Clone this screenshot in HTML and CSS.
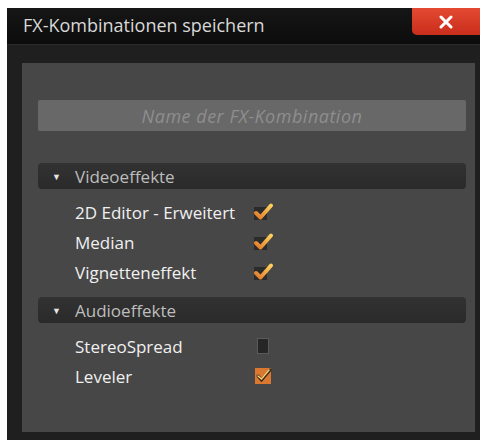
FILE: index.html
```html
<!DOCTYPE html>
<html>
<head>
<meta charset="utf-8">
<link rel="stylesheet" href="styles.css">
</head>
<body>
<div class="window">
  <div class="titlebar">
    <span class="title">FX-Kombinationen speichern</span>
    <button class="close" aria-label="Schließen">
      <svg width="14" height="14" viewBox="0 0 14 14"><path d="M2 2 L12 12 M12 2 L2 12" stroke="#fff" stroke-width="3" stroke-linecap="round"/></svg>
    </button>
  </div>
  <div class="frame">
    <div class="panel">
      <div class="namebox">Name der FX-Kombination</div>

      <div class="group">
        <div class="ghead"><span class="tri">&#9660;</span><span>Videoeffekte</span></div>
        <div class="items">
          <div class="item"><span class="lbl">2D Editor - Erweitert</span><span class="cb checked"><svg width="24" height="22" viewBox="0 0 24 22"><rect x="3" y="6" width="13" height="13" fill="#2b2b2b"/><path d="M5 12 L9.5 16.5 L20 4.5" fill="none" stroke="url(#g)" stroke-width="4" stroke-linecap="round" stroke-linejoin="round"/></svg></span></div>
          <div class="item"><span class="lbl">Median</span><span class="cb checked"><svg width="24" height="22" viewBox="0 0 24 22"><rect x="3" y="6" width="13" height="13" fill="#2b2b2b"/><path d="M5 12 L9.5 16.5 L20 4.5" fill="none" stroke="url(#g)" stroke-width="4" stroke-linecap="round" stroke-linejoin="round"/></svg></span></div>
          <div class="item"><span class="lbl">Vignetteneffekt</span><span class="cb checked"><svg width="24" height="22" viewBox="0 0 24 22"><rect x="3" y="6" width="13" height="13" fill="#2b2b2b"/><path d="M5 12 L9.5 16.5 L20 4.5" fill="none" stroke="url(#g)" stroke-width="4" stroke-linecap="round" stroke-linejoin="round"/></svg></span></div>
        </div>
      </div>

      <div class="group">
        <div class="ghead"><span class="tri">&#9660;</span><span>Audioeffekte</span></div>
        <div class="items">
          <div class="item"><span class="lbl">StereoSpread</span><span class="cb"><svg width="24" height="22" viewBox="0 0 24 22"><rect x="6.5" y="3.5" width="11" height="15" fill="#262626" stroke="#5a5a5a"/></svg></span></div>
          <div class="item"><span class="lbl">Leveler</span><span class="cb"><svg width="24" height="22" viewBox="0 0 24 22"><rect x="4" y="3" width="16" height="16" fill="#d9782e"/><path d="M7 11 L10.5 15 L19 5" fill="none" stroke="#3a2a20" stroke-width="3" stroke-linecap="round"/><path d="M7 11 L10.5 14 L18 5" fill="none" stroke="#ffd070" stroke-width="1.5" stroke-linecap="round"/></svg></span></div>
        </div>
      </div>
    </div>
  </div>
</div>
<svg width="0" height="0" class="defs"><defs><linearGradient id="g" x1="0" y1="1" x2="1" y2="0"><stop offset="0" stop-color="#e07a2a"/><stop offset="1" stop-color="#ffd060"/></linearGradient></defs></svg>
</body>
</html>
```
FILE: styles.css
```css
html, body {
  margin: 0;
  padding: 0;
  background: #ffffff;
}
body {
  font-family: "Open Sans", "Noto Sans", sans-serif;
  overflow: hidden;
}
.window {
  margin: 8px 0 0 7px;
  width: 473px;
  height: 432px;
  background: #1d1d1d;
  display: flex;
  flex-direction: column;
}
.titlebar {
  height: 36px;
  background: linear-gradient(#161616, #0c0c0c);
  display: flex;
  align-items: flex-start;
  justify-content: space-between;
  flex: none;
}
.title {
  color: #d8d8d8;
  font-size: 18px;
  line-height: 34px;
  padding-left: 16px;
}
.close {
  width: 68px;
  height: 27px;
  border: none;
  padding: 0;
  margin: 0;
  background: linear-gradient(#e44a32, #c92d1c);
  border-bottom-left-radius: 5px;
  display: flex;
  align-items: center;
  justify-content: center;
}
.frame {
  flex: 1;
  background: #1f1f1f;
  padding: 18px 5px 8px 15px;
  display: flex;
  border-top: 1px solid #2a2a2a;
}
.panel {
  flex: 1;
  background: #474747;
  padding: 37px 9px 0 16px;
}
.namebox {
  height: 31px;
  background: #686868;
  border-radius: 2px;
  color: #8e8e8e;
  font-style: italic;
  font-size: 18px;
  letter-spacing: 0.5px;
  display: flex;
  align-items: center;
  justify-content: center;
  margin-bottom: 32px;
}
.group + .group {
  margin-top: 10px;
}
.ghead {
  height: 26px;
  background: linear-gradient(#323232, #2a2a2a);
  border-radius: 4px;
  display: flex;
  align-items: center;
  color: #bdbdbd;
  font-size: 17px;
  margin-bottom: 8px;
}
.tri {
  font-size: 9px;
  color: #e6e6e6;
  width: 37px;
  padding-left: 14px;
  box-sizing: border-box;
}
.items {
  padding-left: 37px;
}
.item {
  height: 30px;
  display: flex;
  align-items: center;
}
.lbl {
  width: 176px;
  color: #f0f0f0;
  font-size: 17px;
  font-weight: 500;
  letter-spacing: 0;
}
.cb {
  display: flex;
}
.defs {
  position: absolute;
}
```
